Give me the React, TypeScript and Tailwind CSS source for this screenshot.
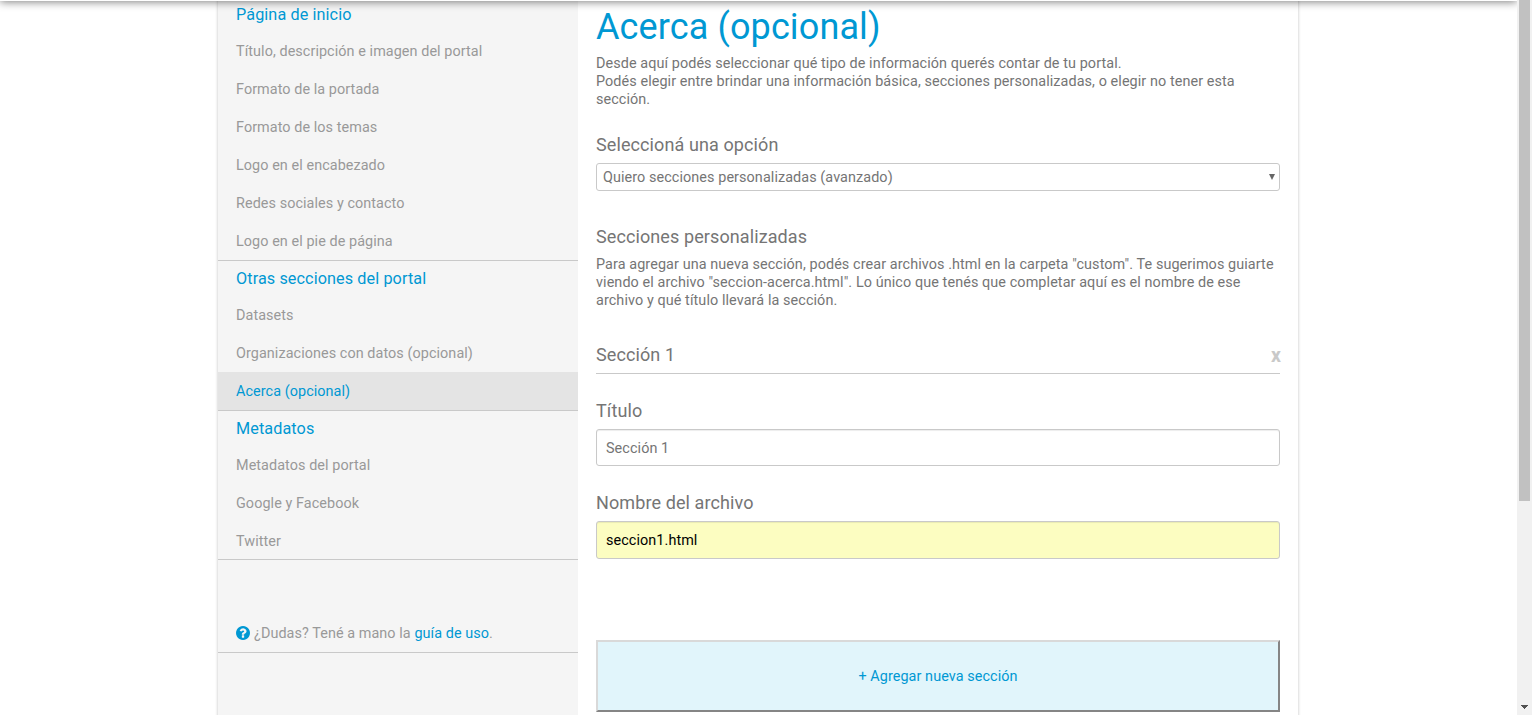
import type { ReactNode } from 'react';

type Group = { title: string; items: string[]; className: string };

const groups: Group[] = [
  {
    title: 'Página de inicio',
    items: [
      'Título, descripción e imagen del portal',
      'Formato de la portada',
      'Formato de los temas',
      'Logo en el encabezado',
      'Redes sociales y contacto',
      'Logo en el pie de página',
    ],
    className: 'h-[264px]',
  },
  {
    title: 'Otras secciones del portal',
    items: ['Datasets', 'Organizaciones con datos (opcional)', 'Acerca (opcional)'],
    className: 'h-[150px]',
  },
  {
    title: 'Metadatos',
    items: ['Metadatos del portal', 'Google y Facebook', 'Twitter'],
    className: 'h-[149px]',
  },
];

const ACTIVE = 'Acerca (opcional)';

function HelpIcon() {
  return (
    <svg className="mr-1 mb-[3px] size-[14px] shrink-0" viewBox="0 0 1536 1536" aria-hidden="true">
      <path
        fill="#0098d3"
        d="M896 1248v-192q0-14-9-23t-23-9H672q-14 0-23 9t-9 23v192q0 14 9 23t23 9h192q14 0 23-9t9-23zm256-672q0-88-55.500-163T958 297t-170-41q-243 0-371 213-15 24 8 42l132 100q7 6 19 6 16 0 25-12 53-68 86-92 34-24 86-24 48 0 85.500 26t37.500 59q0 38-20 61t-68 45q-63 28-115.500 86.500T640 892v36q0 14 9 23t23 9h192q14 0 23-9t9-23q0-19 21.500-49.500T972 829q32-18 49-28.500t46-35 44.500-48 28-60.500 12.500-81zm384 192q0 209-103 385.500T1153.500 1433 768 1536t-385.500-103T103 1153.500 0 768t103-385.500T382.500 103 768 0t385.500 103T1433 382.500 1536 768z"
      />
    </svg>
  );
}

function Sidebar() {
  return (
    <aside className="w-[360px] shrink-0 bg-[#f5f5f5] text-[14.4px] tracking-[0.07px] text-[#999]">
      {groups.map((g) => (
        <nav key={g.title} className={`${g.className} flex flex-col overflow-hidden border-b border-[#c9c9c9]`}>
          <h2 className="h-[35px] shrink-0 px-[18px] text-[16.2px] leading-[35px] tracking-[0.1px] text-[#0098d3]">
            {g.title}
          </h2>
          {g.items.map((item) => (
            <a
              key={item}
              className={
                item === ACTIVE
                  ? 'block h-[38px] shrink-0 bg-[#e4e4e4] px-[18px] leading-[40px] text-[#0098d3]'
                  : 'block h-[38px] shrink-0 px-[18px] leading-[40px]'
              }
            >
              {item}
            </a>
          ))}
        </nav>
      ))}
      <div className="flex h-[93px] items-end border-b border-[#c9c9c9] px-[18px]">
        <p className="flex h-9 items-center">
          <HelpIcon />
          <span>
            ¿Dudas? Tené a mano la <a className="text-[#0098d3]">guía de uso</a>.
          </span>
        </p>
      </div>
    </aside>
  );
}

function Label({ children }: { children: ReactNode }) {
  return <label className="block h-6 text-[18px] leading-6 tracking-[0.1px]">{children}</label>;
}

function Main() {
  return (
    <main className="w-[720px] px-[18px] text-[14.4px] leading-[18px] tracking-[0.08px] text-[#757575]">
      <h1 className="mt-3 h-9 text-[36px] leading-9 tracking-[0.12px] text-[#0098d3]">Acerca (opcional)</h1>
      <p className="mt-[10px]">
        Desde aquí podés seleccionar qué tipo de información querés contar de tu portal.
        <br />
        Podés elegir entre brindar una información básica, secciones personalizadas, o elegir no tener esta sección.
      </p>
      <div className="mt-6">
        <Label>Seleccioná una opción</Label>
        <div className="mt-[6px] flex h-7 items-center justify-between rounded-[3px] border border-[#c9c9c9] bg-white pr-1 pl-[6px]">
          <span className="pt-[2px]">Quiero secciones personalizadas (avanzado)</span>
          <svg className="h-[6px] w-[6px]" viewBox="0 0 6 6" aria-hidden="true">
            <path d="M0 0h6L3 6z" fill="#666" />
          </svg>
        </div>
      </div>
      <div className="mt-[34px]">
        <Label>Secciones personalizadas</Label>
        <p className="mt-[7px] tracking-[0.09px]">
          Para agregar una nueva sección, podés crear archivos .html en la carpeta "custom". Te sugerimos guiarte viendo
          el archivo "seccion-acerca.html". Lo único que tenés que completar aquí es el nombre de ese archivo y qué
          título llevará la sección.
        </p>
      </div>
      <div className="mt-[33px] flex h-[31px] items-start justify-between border-b border-[#c9c9c9]">
        <Label>Sección 1</Label>
        <button className="-mr-px h-6 text-[19.5px] leading-[23px] font-bold text-[#c9c9c9]">x</button>
      </div>
      <div className="mt-[25px]">
        <Label>Título</Label>
        <input
          className="mt-[6px] block h-[37px] w-full rounded-[3px] border border-[#c9c9c9] bg-white px-[9px] pt-[2px] shadow-[inset_0_1px_1px_rgba(0,0,0,0.075)] outline-none"
          defaultValue="Sección 1"
        />
      </div>
      <div className="mt-[25px]">
        <Label>Nombre del archivo</Label>
        <input
          className="mt-[6px] block h-[38px] w-full rounded-[3px] border border-[#c9c9c9] bg-[#fcfdc1] px-[9px] text-black shadow-[inset_0_1px_1px_rgba(0,0,0,0.075)] outline-none"
          defaultValue="seccion1.html"
        />
      </div>
      <button className="mt-[81px] block h-[72px] w-full border-2 border-t-[#d9d9d9] border-r-[#858585] border-b-[#858585] border-l-[#d9d9d9] bg-[#e1f5fb] pt-[2px] text-[#0098d3]">
        + Agregar nueva sección
      </button>
    </main>
  );
}

export default function App() {
  return (
    <div className="flex h-[715px] w-[1532px] overflow-hidden bg-white font-['Roboto',sans-serif]">
      <div className="relative h-full w-[1517px] overflow-hidden">
        <div className="-mt-[3px] ml-[218px] flex h-[730px] w-[1080px] bg-white shadow-[0_0_3px_rgba(0,0,0,0.25)]">
          <Sidebar />
          <Main />
        </div>
        <div className="absolute -top-5 left-0 h-[21px] w-full bg-white shadow-[0_1px_8px_rgba(0,0,0,0.5)]" />
      </div>
      <div className="flex h-full w-[15px] flex-col items-center justify-between bg-[#f1f1f1] pb-[6px]">
        <div className="h-[501px] w-[11px] bg-[#c1c1c1]" />
        <svg className="h-1 w-[7px]" viewBox="0 0 7 4" aria-hidden="true">
          <path d="M0 0h7v1H6v1H5v1H4v1H3V3H2V2H1V1H0z" fill="#505050" />
        </svg>
      </div>
    </div>
  );
}
